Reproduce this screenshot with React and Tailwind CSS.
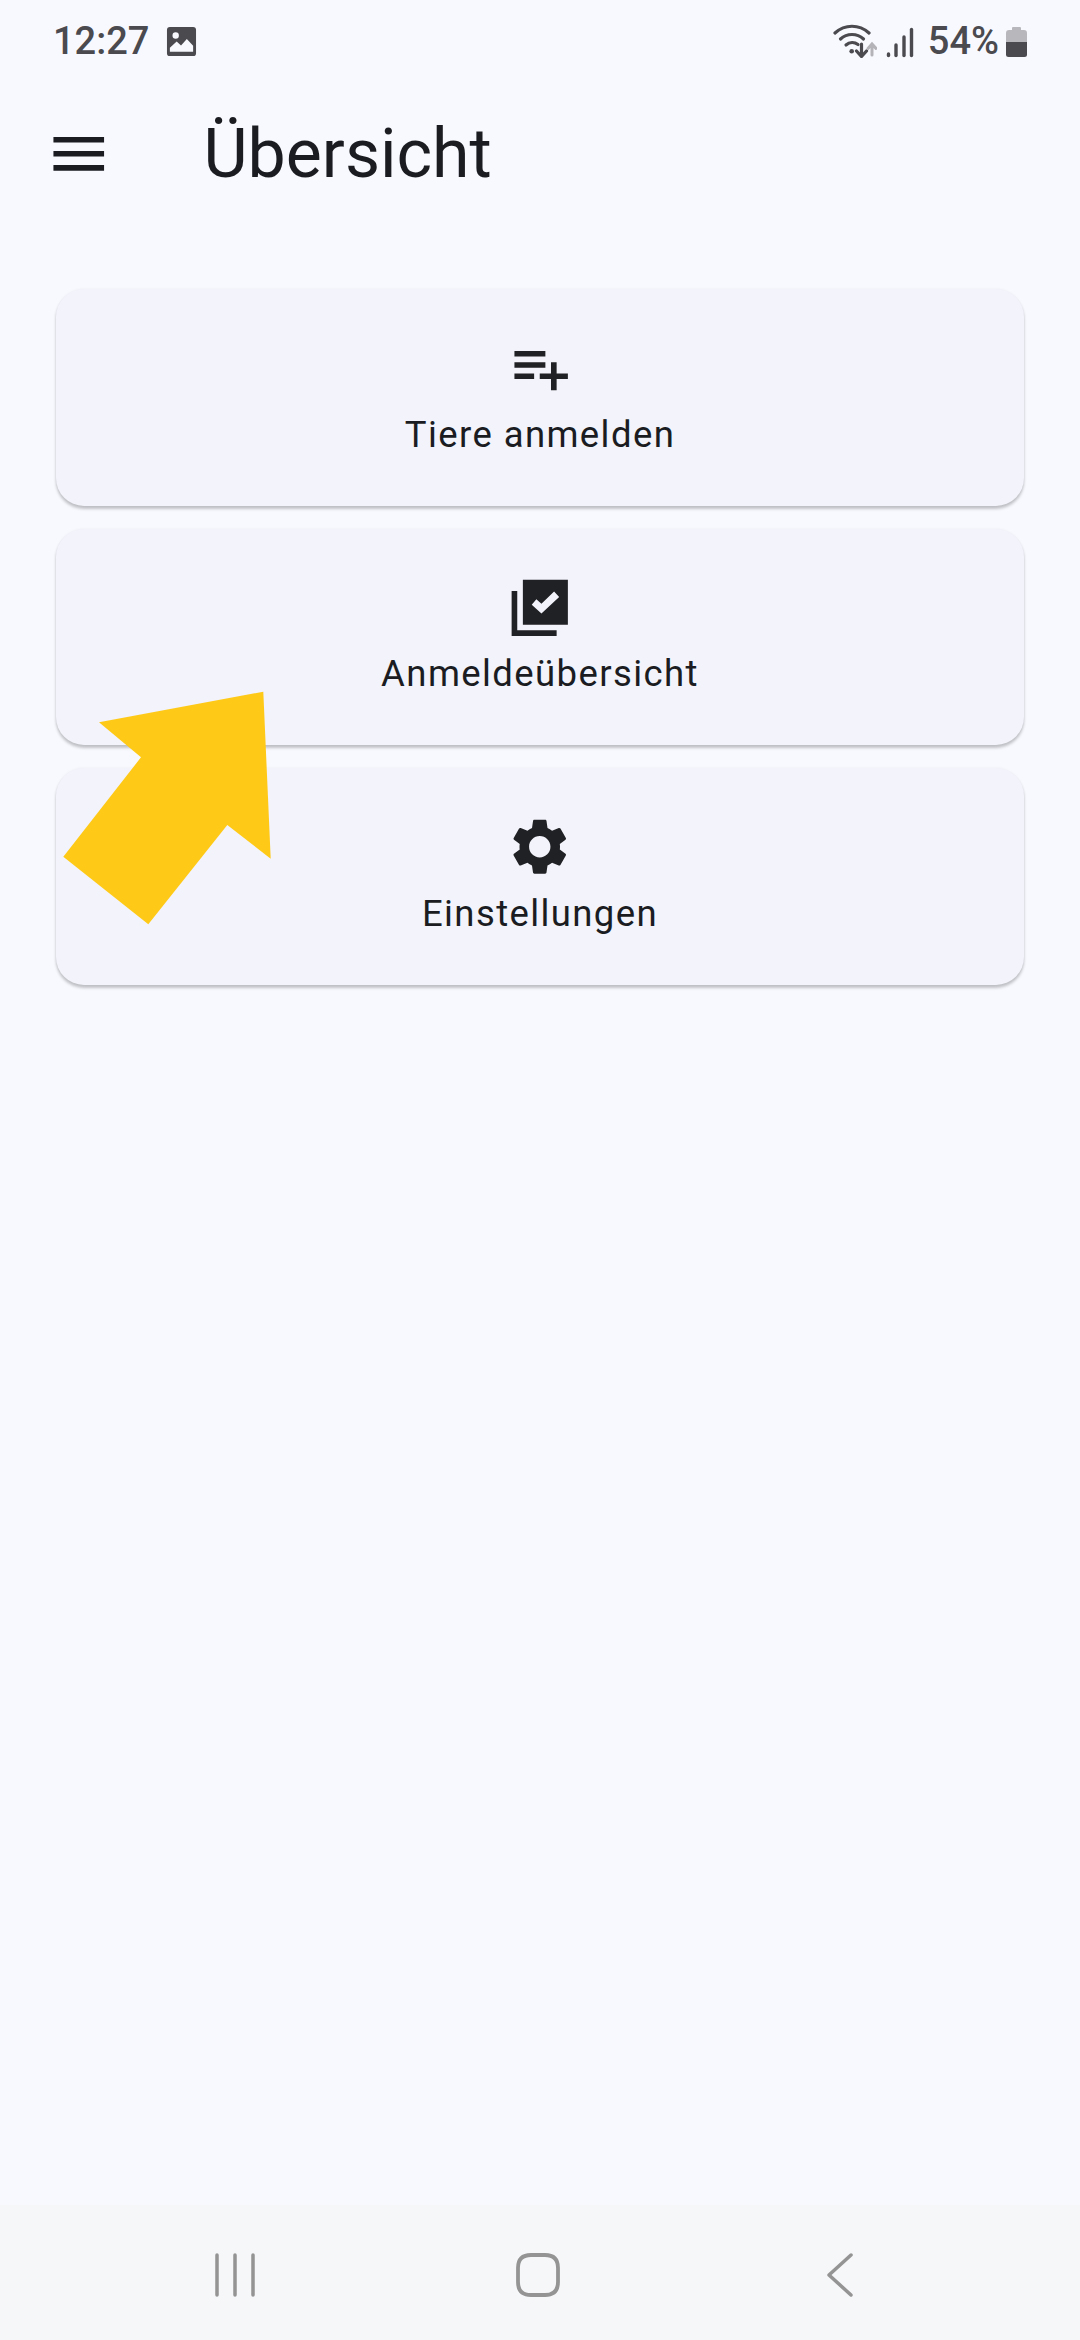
import React from "react";

function StatusIcons() {
  return (
    <div className="flex items-center">
      <svg width="44" height="34" viewBox="0 0 44 34" className="block">
        <g fill="none" stroke="#4a4a4f" strokeWidth="3.2" strokeLinecap="round">
          <path d="M2 9 C 12 0, 26 0, 36 9" />
          <path d="M7.500 15 C 14 9, 24 9, 30.500 15" />
          <path d="M13 21 C 16.500 18, 21.500 18, 25 20.500" />
          <path d="M28.500 20 V32 M23.500 27 L28.500 32.500 L33.500 27" />
        </g>
        <circle cx="18.700" cy="27.300" r="2.300" fill="#4a4a4f" />
        <g fill="none" stroke="#b4b4b8" strokeWidth="3" strokeLinecap="round">
          <path d="M39 31 V21 M35 24.500 L39 20 L43 24.500" />
        </g>
      </svg>
      <svg width="29" height="34" viewBox="0 0 29 34" className="ml-[9px] block">
        <g fill="none" stroke="#4a4a4f" strokeWidth="3.4" strokeLinecap="round">
          <path d="M2.500 30 V31.500" />
          <path d="M10 21 V31.500" />
          <path d="M18 13 V31.500" />
          <path d="M25.500 5.500 V31.500" />
        </g>
      </svg>
      <span className="ml-[13px] text-[38px] leading-none font-medium text-[#4a4a4f]">54%</span>
      <svg width="21" height="34" viewBox="0 0 21 34" className="ml-[7px] block">
        <path d="M7 3 H14 Q15 3 15 4 V6 H18 Q21 6 21 9 V18 H0 V9 Q0 6 3 6 H6 V4 Q6 3 7 3 Z" fill="#b8b8bc" />
        <path d="M0 18 H21 V30.500 Q21 33 18.500 33 H2.500 Q0 33 0 30.500 Z" fill="#4a4a4f" />
      </svg>
    </div>
  );
}

function Card({ label, children }) {
  return (
    <button className="flex h-[216.5px] w-full flex-col items-center rounded-[28px] bg-[#f2f3fb] pt-[45px] shadow-[0_3px_3px_rgba(0,0,0,0.22),0_0_3px_rgba(0,0,0,0.05)]">
      {children}
      <span className="mt-[11px] text-[36.500px] leading-[44px] tracking-[1.400px] text-[#1a1c22]">{label}</span>
    </button>
  );
}

export default function App() {
  return (
    <div className="relative flex h-[2340px] w-[1080px] flex-col overflow-hidden bg-[#f8f9ff] font-['Roboto',sans-serif]">
      <div className="flex h-[82px] shrink-0 items-center justify-between pr-[53px] pl-[53px]">
        <div className="flex items-center">
          <span className="text-[38px] leading-[44px] font-medium text-[#4a4a4f]">12:27</span>
          <svg width="31" height="31" viewBox="0 0 32 32" className="ml-[17px] block">
            <path fillRule="evenodd" d="M4 1 H28 Q31 1 31 4 V28 Q31 31 28 31 H4 Q1 31 1 28 V4 Q1 1 4 1 Z M10 6.500 A3.300 3.300 0 1 0 10 13.100 A3.300 3.300 0 1 0 10 6.500 Z M4 26.500 V22.500 L11 16 L15.500 20 L21.500 13.500 L28 20.500 V26.500 Z" fill="#4a4a4f" />
          </svg>
        </div>
        <StatusIcons />
      </div>

      <header className="flex h-[144px] shrink-0 items-center pl-[45px]">
        <svg width="67.5" height="67.5" viewBox="0 0 24 24" className="block" fill="#1a1c22">
          <path d="M3 18h18v-2H3v2zm0-5h18v-2H3v2zm0-7v2h18V6H3z" />
        </svg>
        <h1 className="ml-[91px] text-[68px] leading-none font-normal text-[#1a1c22]">Übersicht</h1>
      </header>

      <main className="flex flex-col gap-[23px] px-[56px] pt-[63px]">
        <Card label="Tiere anmelden">
          <svg width="67.5" height="67.5" viewBox="0 0 24 24" fill="#202124" className="block">
            <path d="M14 10H3v2h11v-2zm0-4H3v2h11V6zm4 8v-4h-2v4h-4v2h4v4h2v-4h4v-2h-4zM3 16h7v-2H3v2z" />
          </svg>
        </Card>
        <Card label="Anmeldeübersicht">
          <svg width="67.5" height="67.5" viewBox="0 0 24 24" fill="#202124" fillRule="evenodd" className="block">
            <path d="M4 6H2v16h16v-2H4V6zm18-4H6v16h16V2zM9.150 10.900L10.800 9l1.800 1.600 4.500-4.400 1.800 2-6.300 5.800z" />
          </svg>
        </Card>
        <Card label="Einstellungen">
          <svg width="67.5" height="67.5" viewBox="0 0 24 24" fill="#202124" className="block">
            <path d="M19.140 12.940c.04-.3.060-.61.060-.94 0-.32-.02-.64-.07-.94l2.030-1.580c.18-.14.23-.41.120-.61l-1.920-3.320c-.12-.22-.37-.29-.59-.22l-2.390.96c-.5-.38-1.030-.7-1.620-.94l-.36-2.540c-.04-.24-.24-.41-.48-.41h-3.840c-.24 0-.43.170-.47.410l-.36 2.540c-.59.240-1.130.570-1.620.94l-2.390-.96c-.22-.08-.47 0-.59.220L2.740 8.870c-.12.210-.08.470.12.610l2.030 1.580c-.05.300-.09.630-.09.940s.02.640.07.940l-2.030 1.580c-.18.140-.23.410-.12.610l1.920 3.320c.12.220.37.290.59.220l2.390-.96c.5.380 1.030.7 1.620.94l.36 2.540c.05.240.24.410.48.410h3.840c.24 0 .44-.17.470-.41l.36-2.540c.59-.24 1.130-.56 1.620-.94l2.390.96c.22.080.47 0 .59-.22l1.920-3.320c.12-.22.070-.47-.12-.61l-2.010-1.580zM12 15.800c-2.090 0-3.800-1.710-3.800-3.800s1.710-3.800 3.800-3.800 3.800 1.710 3.800 3.800-1.710 3.800-3.800 3.800z" />
          </svg>
        </Card>
      </main>

      <nav className="mt-auto flex h-[135px] shrink-0 items-center justify-between bg-[#f6f7f9] pt-[4px] pr-[218px] pl-[213px]">
        <svg width="44" height="44" viewBox="0 0 44 44" className="block" fill="none" stroke="#949494" strokeWidth="3.500" strokeLinecap="round">
          <path d="M4 2 V42 M22 2 V42 M40 2 V42" />
        </svg>
        <svg width="44" height="44" viewBox="0 0 44 44" className="block" fill="none" stroke="#949494" strokeWidth="3.800">
          <path d="M15 2 H29 C37 2 42 6 42 15 V29 C42 38 37 42 29 42 H15 C7 42 2 38 2 29 V15 C2 6 7 2 15 2 Z" />
        </svg>
        <svg width="44" height="44" viewBox="0 0 44 44" className="block" fill="none" stroke="#949494" strokeWidth="3.500" strokeLinecap="round" strokeLinejoin="round">
          <path d="M33 2 L11 22 L33 42" />
        </svg>
      </nav>

      <svg width="1080" height="2340" viewBox="0 0 1080 2340" className="pointer-events-none absolute top-0 left-0 block">
        <polygon points="263.300,691.700 270.700,858.700 227.300,825 148.300,924.300 63.300,856.700 141,757.300 99,722.300" fill="#ffc917" />
      </svg>
    </div>
  );
}
